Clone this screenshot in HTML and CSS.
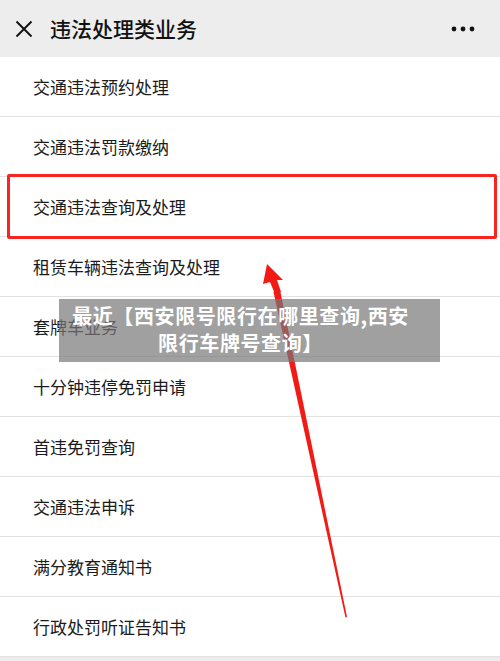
FILE: index.html
```html
<!DOCTYPE html>
<html lang="zh-CN">
<head>
<meta charset="utf-8">
<title>违法处理类业务</title>
<link rel="stylesheet" href="styles.css">
</head>
<body>
<div class="page">
  <header class="topbar">
    <svg class="close" width="18" height="18" viewBox="0 0 18 18"><path d="M1.5 1.5 L16.5 16.5 M16.5 1.5 L1.5 16.5" stroke="#111" stroke-width="1.9" fill="none"/></svg>
    <h1 class="title">违法处理类业务</h1>
    <svg class="more" width="24" height="6" viewBox="0 0 24 6"><circle cx="3" cy="3" r="2.4" fill="#111"/><circle cx="12" cy="3" r="2.4" fill="#111"/><circle cx="21" cy="3" r="2.4" fill="#111"/></svg>
  </header>
  <ul class="list">
    <li class="item">交通违法预约处理</li>
    <li class="item">交通违法罚款缴纳</li>
    <li class="item">交通违法查询及处理</li>
    <li class="item">租赁车辆违法查询及处理</li>
    <li class="item">套牌车业务</li>
    <li class="item">十分钟违停免罚申请</li>
    <li class="item">首违免罚查询</li>
    <li class="item">交通违法申诉</li>
    <li class="item">满分教育通知书</li>
    <li class="item">行政处罚听证告知书</li>
  </ul>
  <div class="highlight"></div>
  <svg class="arrow" width="500" height="661" viewBox="0 0 500 661">
    <polygon points="273.5,292 280,290 347,617 345.5,617.5" fill="#f21a14"/>
    <polygon points="267,264 263,284 270,282 275,294 281,292 277,280 283,280" fill="#f21a14"/>
  </svg>
  <div class="caption">最近【西安限号限行在哪里查询,西安<br>限行车牌号查询】</div>
</div>
</body>
</html>
```
FILE: styles.css
```css
html, body {
  margin: 0;
  padding: 0;
  background: #ededed;
}
.page {
  position: relative;
  width: 500px;
  height: 661px;
  overflow: hidden;
  font-family: "Noto Sans CJK SC", "Noto Sans", sans-serif;
  background: #ededed;
}
.topbar {
  height: 57px;
  display: flex;
  align-items: center;
  padding: 0 25px 0 15px;
  background: #ededed;
}
.close {
  flex: none;
  margin-top: 1px;
}
.title {
  flex: 1;
  margin: 0 0 0 17px;
  font-size: 21px;
  font-weight: 500;
  color: #111;
  line-height: 1;
}
.more {
  flex: none;
}
.list {
  list-style: none;
  margin: 0;
  padding: 0;
  background: #fff;
}
.item {
  height: 59px;
  border-bottom: 1px solid #e2e2e2;
  display: flex;
  align-items: center;
  padding-left: 33px;
  font-size: 17px;
  color: #1b1b1b;
}
.highlight {
  position: absolute;
  left: 7px;
  top: 174px;
  width: 484px;
  height: 59px;
  border: 3px solid #f72520;
  border-radius: 2px;
}
.arrow {
  position: absolute;
  left: 0;
  top: 0;
}
.caption {
  position: absolute;
  left: 59px;
  top: 299px;
  width: 381px;
  height: 63px;
  box-sizing: border-box;
  padding: 3px 18px 0 0;
  background: rgba(120, 120, 120, 0.7);
  color: #fff;
  font-weight: 700;
  font-size: 20px;
  letter-spacing: 0.6px;
  line-height: 27px;
  text-align: center;
}
```
